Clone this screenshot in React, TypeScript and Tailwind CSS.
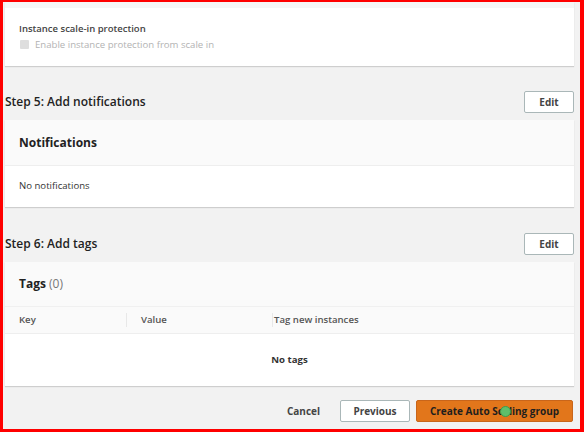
export default function App() {
  return (
    <div className="w-[584px] h-[432px] overflow-hidden bg-[#f2f2f2] border-solid border-[#ff0000] border-t-2 border-l-[3px] border-r-4 border-b-[3px] font-['Open_Sans',Arial,sans-serif] text-[#333]">
      <div className="flex flex-col h-full">
        {/* Scale-in protection panel */}
        <div className="ml-[2px] mr-[6px] bg-white shadow-[0_1px_1px_rgba(0,0,0,0.15)]">
          <div className="h-[6px] bg-[#f6f6f6]" />
          <div className="h-[58px] pl-[14px] pt-[14px]">
            <div className="text-[9.5px] leading-[13px] font-semibold text-[#444]">
              Instance scale-in protection
            </div>
            <div className="mt-[3px] flex items-center">
              <span className="ml-[1px] w-[9px] h-[9px] bg-[#dedede] rounded-[1px]" />
              <span className="ml-[6px] text-[9.6px] leading-[13px] text-[#b3b3b3]">
                Enable instance protection from scale in
              </span>
            </div>
          </div>
        </div>

        {/* Step 5 */}
        <div className="mt-[25px] mb-[7px] h-[22px] ml-[2px] mr-[6px] flex items-center justify-between">
          <h2 className="text-[12px] font-semibold text-[#222]">Step 5: Add notifications</h2>
          <button className="w-[50px] h-[22px] bg-white border border-[#aab7b8] rounded-[2px] text-[10px] font-bold text-[#444]">
            Edit
          </button>
        </div>
        <div className="ml-[2px] mr-[6px] bg-white shadow-[0_1px_1px_rgba(0,0,0,0.15)]">
          <div className="h-[46px] bg-[#fafafa] border-b border-[#eeeeee] flex items-center pl-[14px]">
            <h3 className="text-[12px] font-bold text-[#222]">Notifications</h3>
          </div>
          <div className="h-[41px] flex items-center pl-[14px] text-[9.6px] text-[#333]">No notifications</div>
        </div>

        {/* Step 6 */}
        <div className="mt-[26px] mb-[7px] h-[22px] ml-[2px] mr-[6px] flex items-center justify-between">
          <h2 className="text-[12px] font-semibold text-[#222]">Step 6: Add tags</h2>
          <button className="w-[50px] h-[22px] bg-white border border-[#aab7b8] rounded-[2px] text-[10px] font-bold text-[#444]">
            Edit
          </button>
        </div>
        <div className="ml-[2px] mr-[6px] bg-white shadow-[0_1px_1px_rgba(0,0,0,0.15)]">
          <div className="h-[45px] bg-[#fafafa] border-b border-[#f0f0f0] flex items-center pl-[14px]">
            <h3 className="text-[12px] font-bold text-[#222]">
              Tags <span className="font-normal text-[#777]">(0)</span>
            </h3>
          </div>
          <div className="h-[27px] bg-[#fafafa] border-b border-[#eeeeee] flex items-center text-[9.6px] font-semibold text-[#555]">
            <div className="w-[122px] pl-[14px] border-r border-[#e8e8e8]">Key</div>
            <div className="w-[146px] pl-[14px] border-r border-[#e8e8e8]">Value</div>
            <div className="pl-[1px]">Tag new instances</div>
          </div>
          <div className="h-[52px] flex items-center justify-center text-[9.6px] font-bold text-[#333]">No tags</div>
        </div>

        {/* Footer */}
        <div className="mt-[14px] h-[22px] mr-[7px] flex items-center justify-end">
          <span className="text-[10px] font-bold text-[#444] mr-[20px]">Cancel</span>
          <button className="w-[70px] h-[22px] bg-white border border-[#aab7b8] rounded-[2px] text-[10px] font-bold text-[#444] mr-[6px]">
            Previous
          </button>
          <button className="relative w-[157px] h-[22px] bg-[#e2761b] border border-[#c9651a] rounded-[2px] text-[10px] font-bold text-[#1e1e1e]">
            Create Auto Scaling group
            <span className="absolute left-[83px] top-[5px] w-[11px] h-[11px] rounded-full bg-[#5fbf6a] border border-[#3f9a4a]" />
          </button>
        </div>
      </div>
    </div>
  );
}
